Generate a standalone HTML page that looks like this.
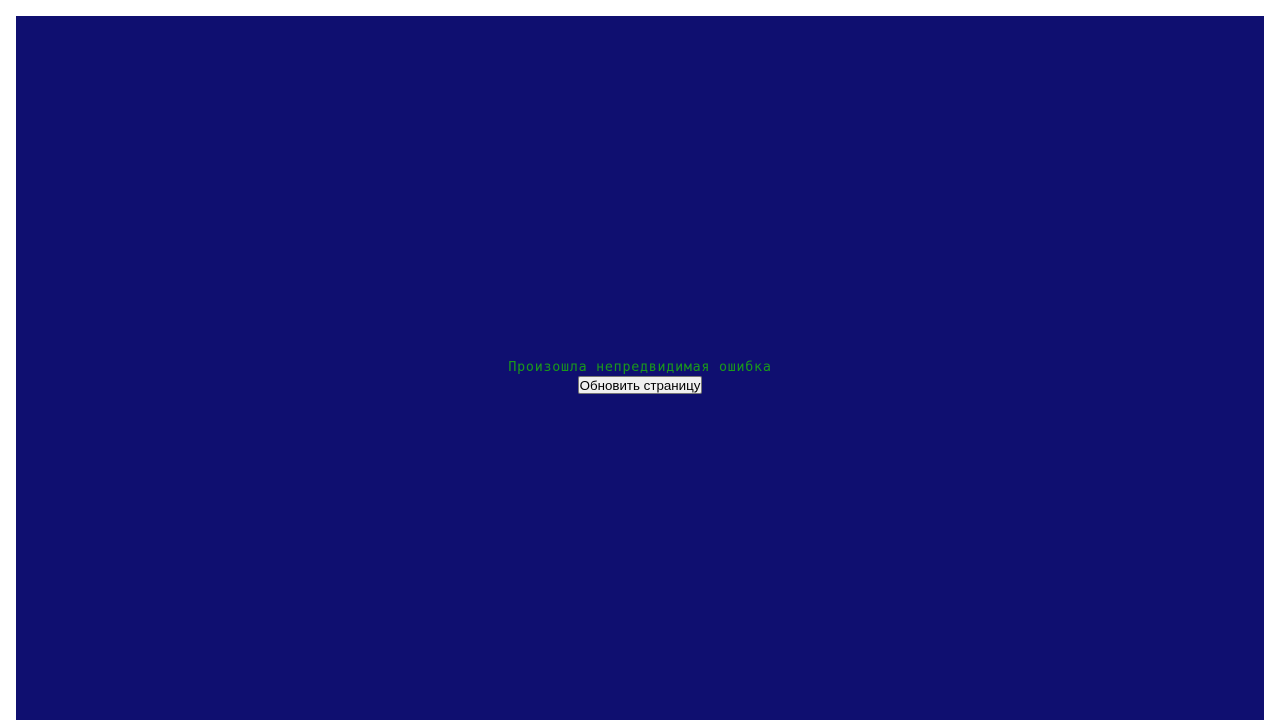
<!DOCTYPE html>
<html><head><meta charset="utf-8"><style>
html{margin:0;padding:0;height:720px;overflow:hidden;background:#fff;}
body{margin:0;padding:16px 16px 0 16px;overflow:hidden;height:720px;box-sizing:border-box;}
.box{background:#0f0f70;width:1248px;height:720px;display:flex;flex-direction:column;align-items:center;justify-content:center;padding-top:2px;box-sizing:border-box;}
.msg{font-family:"DejaVu Sans Mono","Liberation Mono",monospace;font-size:13.33px;letter-spacing:0.75px;color:#1a9a1a;line-height:16px;}
button{font-family:"Liberation Sans",sans-serif;font-size:13.33px;color:#000;background:#f0f0f0;border:1px solid #767676;border-radius:2px;padding:0 1px;height:18px;line-height:15px;}
</style></head><body>
<div class="box"><div class="msg">Произошла непредвидимая ошибка</div><button>Обновить страницу</button></div>
</body></html>
